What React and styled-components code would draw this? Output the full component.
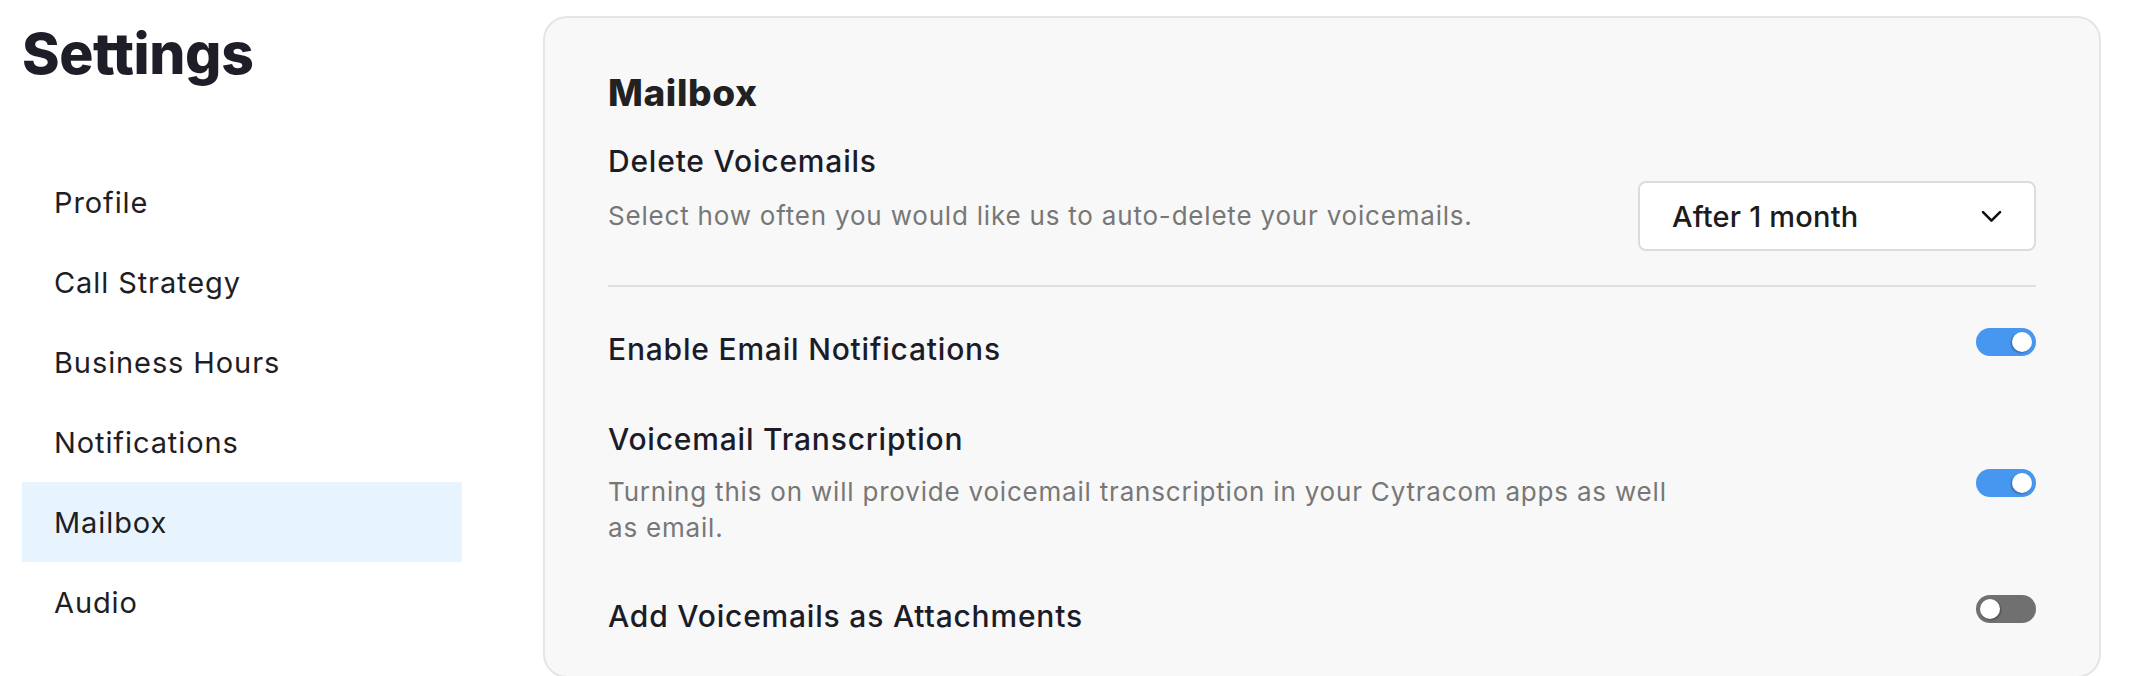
import React, { useState } from "react";
import styled, { createGlobalStyle } from "styled-components";

const GlobalStyle = createGlobalStyle`
  html, body {
    margin: 0;
    padding: 0;
    background: #ffffff;
  }
  body {
    font-family: Inter, "Noto Sans", "Liberation Sans", sans-serif;
    color: #1d1d27;
  }
  * { box-sizing: border-box; }
`;

const Page = styled.div`
  display: grid;
  grid-template-columns: 440px 1fr;
  column-gap: 81px;
  padding: 16px 29px 0 22px;
`;

const Sidebar = styled.aside`
  display: flex;
  flex-direction: column;
`;

const PageTitle = styled.h1`
  margin: 4px 0 0;
  font-size: 57px;
  line-height: 68px;
  font-weight: 800;
  letter-spacing: -0.4px;
  color: #1e1e29;
`;

const Nav = styled.nav`
  display: flex;
  flex-direction: column;
  margin-top: 74px;
`;

const NavItem = styled.a`
  display: flex;
  align-items: center;
  height: 80px;
  padding: 0 32px;
  font-size: 29px;
  font-weight: 400;
  letter-spacing: 0.9px;
  color: #1e1e24;
  text-decoration: none;
  cursor: pointer;
  background: ${(p) => (p.$active ? "#e8f4fd" : "transparent")};
`;

const Card = styled.section`
  background: #f8f8f8;
  border: 2px solid #e5e5e5;
  border-radius: 24px;
  padding: 53px 63px 40px;
`;

const CardTitle = styled.h2`
  margin: 0;
  font-size: 37px;
  line-height: 44px;
  font-weight: 800;
  letter-spacing: 0.6px;
  color: #212121;
`;

const Label = styled.div`
  font-size: 30px;
  line-height: 40px;
  font-weight: 500;
  letter-spacing: 0.8px;
  color: #1c1c28;
`;

const Description = styled.p`
  margin: 0;
  font-size: 26px;
  line-height: 36px;
  font-weight: 400;
  letter-spacing: 0.8px;
  color: #777777;
  max-width: ${(p) => p.$max || "none"};
`;

const RetentionBlock = styled.div`
  margin-top: 26px;
`;

const SelectRow = styled.div`
  display: flex;
  align-items: center;
  justify-content: space-between;
  gap: 24px;
`;

const SelectBox = styled.button`
  display: flex;
  align-items: center;
  justify-content: space-between;
  width: 398px;
  height: 70px;
  padding: 0 32px 0 32px;
  background: #ffffff;
  border: 2px solid #dcdcdc;
  border-radius: 8px;
  font-family: inherit;
  font-size: 29px;
  font-weight: 500;
  letter-spacing: 0.2px;
  color: #1c1c1c;
  cursor: pointer;
`;

const Divider = styled.hr`
  margin: 34px 0 0;
  border: 0;
  height: 2px;
  background: #e0e0e0;
`;

const ToggleList = styled.div`
  display: flex;
  flex-direction: column;
  gap: 50px;
  margin-top: 42px;
`;

const ToggleRow = styled.div`
  display: flex;
  justify-content: space-between;
  align-items: ${(p) => (p.$center ? "center" : "flex-start")};
  gap: 24px;
`;

const TextStack = styled.div`
  display: flex;
  flex-direction: column;
  gap: 15px;
`;

const Track = styled.button`
  position: relative;
  flex: 0 0 auto;
  width: 60px;
  height: 28px;
  padding: 0;
  border: 0;
  border-radius: 14px;
  background: ${(p) => (p.$on ? "#4797f0" : "#707070")};
  cursor: pointer;
  margin-top: ${(p) => p.$nudge || "0px"};
`;

const Knob = styled.span`
  position: absolute;
  top: 4px;
  left: ${(p) => (p.$on ? "36px" : "4px")};
  width: 20px;
  height: 20px;
  border-radius: 50%;
  background: #ffffff;
  box-shadow: ${(p) =>
    p.$on ? "-1px 1px 2px rgba(0,0,0,0.35)" : "1px 1px 2px rgba(0,0,0,0.35)"};
`;

function Toggle({ on, onChange, nudge }) {
  return (
    <Track $on={on} $nudge={nudge} onClick={onChange} aria-pressed={on}>
      <Knob $on={on} />
    </Track>
  );
}

function Chevron() {
  return (
    <svg width="21" height="13" viewBox="0 0 21 13" fill="none">
      <path
        d="M2 2.2 L10.5 10.6 L19 2.2"
        stroke="#111111"
        strokeWidth="2.6"
        strokeLinecap="round"
        strokeLinejoin="round"
      />
    </svg>
  );
}

const navItems = [
  "Profile",
  "Call Strategy",
  "Business Hours",
  "Notifications",
  "Mailbox",
  "Audio",
];

export default function App() {
  const [emailOn, setEmailOn] = useState(true);
  const [transcribeOn, setTranscribeOn] = useState(true);
  const [attachOn, setAttachOn] = useState(false);

  return (
    <>
      <GlobalStyle />
      <Page>
        <Sidebar>
          <PageTitle>Settings</PageTitle>
          <Nav>
            {navItems.map((item) => (
              <NavItem key={item} $active={item === "Mailbox"}>
                {item}
              </NavItem>
            ))}
          </Nav>
        </Sidebar>

        <Card>
          <CardTitle>Mailbox</CardTitle>

          <RetentionBlock>
            <Label>Delete Voicemails</Label>
            <SelectRow>
              <Description>
                Select how often you would like us to auto-delete your voicemails.
              </Description>
              <SelectBox>
                <span>After 1 month</span>
                <Chevron />
              </SelectBox>
            </SelectRow>
          </RetentionBlock>

          <Divider />

          <ToggleList>
            <ToggleRow>
              <Label>Enable Email Notifications</Label>
              <Toggle on={emailOn} nudge="-1px" onChange={() => setEmailOn(!emailOn)} />
            </ToggleRow>

            <ToggleRow $center>
              <TextStack>
                <Label>Voicemail Transcription</Label>
                <Description $max="1080px">
                  Turning this on will provide voicemail transcription in your Cytracom apps as
                  well as email.
                </Description>
              </TextStack>
              <Toggle on={transcribeOn} onChange={() => setTranscribeOn(!transcribeOn)} />
            </ToggleRow>

            <ToggleRow>
              <Label>Add Voicemails as Attachments</Label>
              <Toggle on={attachOn} nudge="-1px" onChange={() => setAttachOn(!attachOn)} />
            </ToggleRow>
          </ToggleList>
        </Card>
      </Page>
    </>
  );
}
